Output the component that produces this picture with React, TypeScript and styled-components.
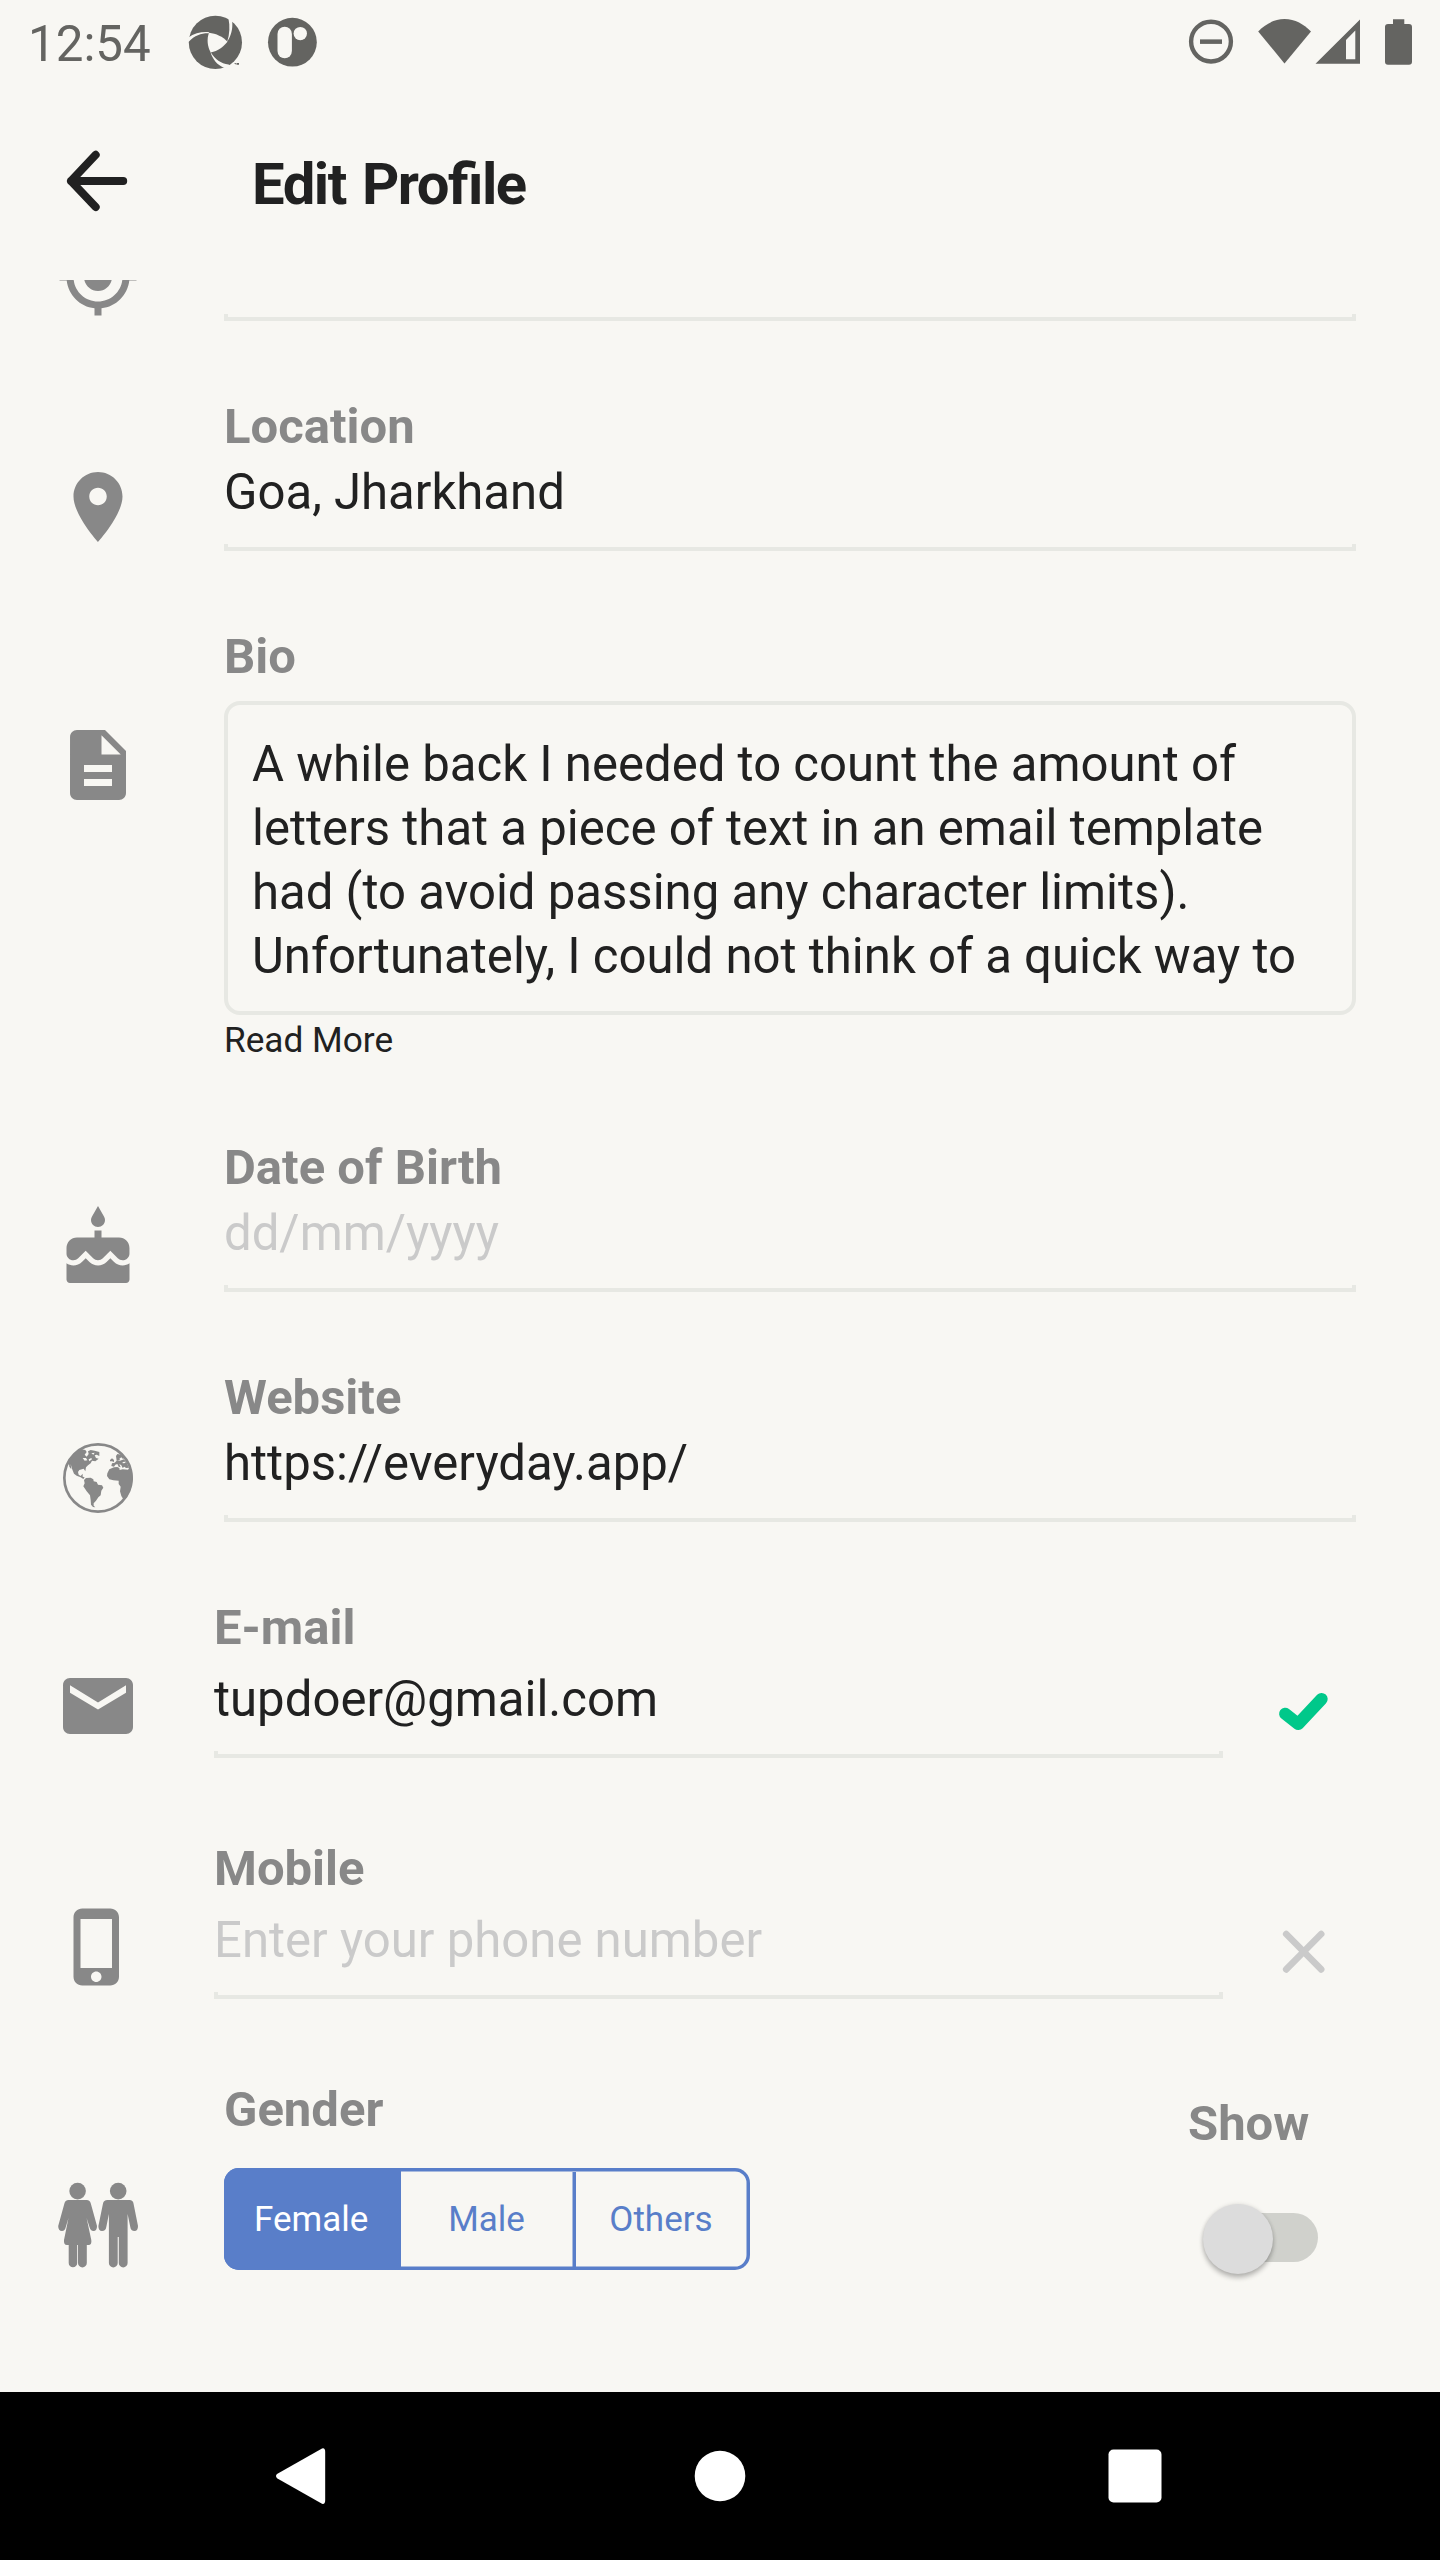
import React, { useState } from 'react';
import styled, { createGlobalStyle } from 'styled-components';

const color = {
  page: '#f8f7f3',
  ink: '#212121',
  muted: '#888888',
  hint: '#cacaca',
  line: '#e7e8e3',
  status: '#646461',
  accent: '#597ec9',
  ok: '#00c88a',
};

const GlobalStyle = createGlobalStyle`
  * { box-sizing: border-box; }
  body { margin: 0; background: ${color.page}; }
`;

const Screen = styled.div`
  display: flex;
  flex-direction: column;
  width: 1440px;
  height: 2560px;
  overflow: hidden;
  background: ${color.page};
  color: ${color.ink};
  font-family: Roboto, 'Liberation Sans', sans-serif;
`;

/* ---------- status bar ---------- */

const StatusBar = styled.header`
  display: flex;
  justify-content: space-between;
  height: 84px;
  padding: 0 26px 0 28px;
  color: ${color.status};
  flex: none;
`;

const StatusLeft = styled.div`
  display: flex;
  align-items: center;
`;

const Clock = styled.span`
  width: 160px;
  font-size: 49.3px;
  line-height: 58px;
  padding-top: 4px;
`;

const StatusIcon = styled.svg`
  display: block;
  flex: none;
`;

/* ---------- app bar ---------- */

const AppBar = styled.div`
  display: flex;
  align-items: center;
  flex: none;
  height: 196px;
  padding: 0 0 2px 55px;
`;

const BackButton = styled.button`
  width: 84px;
  height: 84px;
  margin: 0 113px 0 0;
  padding: 0;
  border: 0;
  background: none;
  color: ${color.ink};

  svg { display: block; }
`;

const Title = styled.h1`
  margin: 0;
  padding-top: 5px;
  font-size: 58px;
  line-height: 68px;
  font-weight: 700;
  letter-spacing: -1.45px;
  word-spacing: 3px;
  font-feature-settings: 'liga' 1;
`;

/* ---------- form ---------- */

const Scroller = styled.main`
  flex: 1;
  min-height: 0;
  overflow: hidden;
`;

const Form = styled.form`
  display: flex;
  flex-direction: column;
  margin-top: -113px;
`;

const Row = styled.section<{ $gap: number; $body: number }>`
  display: grid;
  grid-template-columns: 84px ${(p) => p.$body}px auto;
  column-gap: ${(p) => (p.$body > 1100 ? 84 : 74)}px;
  justify-content: start;
  align-items: start;
  padding-left: 56px;
  margin-bottom: ${(p) => p.$gap}px;
`;

const RowIcon = styled.svg<{ $top: number }>`
  display: block;
  margin-top: ${(p) => p.$top}px;
  overflow: visible;
  fill: ${color.muted};
`;

const Body = styled.div`
  display: flex;
  flex-direction: column;
  min-width: 0;
`;

const Label = styled.label`
  height: 58px;
  font-size: 49px;
  line-height: 60px;
  font-weight: 700;
  color: ${color.muted};
  white-space: nowrap;
`;

const Value = styled.div<{ $space: number; $hint?: boolean }>`
  height: 58px;
  margin: ${(p) => p.$space}px 0 23px;
  font-size: 49.1px;
  line-height: 58px;
  white-space: nowrap;
  color: ${(p) => (p.$hint ? color.hint : color.ink)};
`;

const Underline = styled.div`
  height: 7px;
  border: solid ${color.line};
  border-width: 0 4px 4px;
`;

const BioBox = styled.div`
  height: 314px;
  margin-top: 16px;
  padding: 27px 24px 0;
  border: 4px solid ${color.line};
  border-radius: 16px;
  font-size: 49.1px;
  line-height: 64px;
  white-space: pre;
`;

const ReadMore = styled.button`
  height: 47px;
  margin: 0;
  padding: 4px 0 1px;
  border: 0;
  background: none;
  font: 35.2px/42px Roboto, 'Liberation Sans', sans-serif;
  color: ${color.ink};
  text-align: left;
`;

const Mark = styled.svg`
  display: block;
  margin: 85px 0 0 -26px;
`;

/* ---------- gender ---------- */

const GenderBody = styled.div`
  display: flex;
  justify-content: space-between;
  padding-right: 48px;
`;

const Segments = styled.div`
  display: grid;
  grid-template-columns: 173.5px 174.5px 171px;
  width: 526px;
  height: 102px;
  margin-top: 30px;
  padding: 3.5px;
  box-shadow: inset 0 0 0 3.5px ${color.accent};
  border-radius: 15px;
  overflow: hidden;
`;

const Segment = styled.button<{ $on: boolean; $divider: boolean }>`
  padding: 2px 3.5px 0 0;
  border: 0;
  box-shadow: ${(p) => (p.$divider ? `inset -3.5px 0 0 ${color.accent}` : 'none')};
  background: ${(p) => (p.$on ? color.accent : 'transparent')};
  color: ${(p) => (p.$on ? '#ffffff' : color.accent)};
  font: 35px/42px Roboto, 'Liberation Sans', sans-serif;
  text-align: center;

  &:first-child { margin: -3.5px 0 -3.5px -3.5px; padding-right: 2.5px; }
  &:last-child { padding-right: 0; }
`;

const ShowColumn = styled.div`
  display: flex;
  flex-direction: column;
  align-items: flex-start;
  padding-top: 14px;
  width: 120px;
`;

const Switch = styled.button`
  display: flex;
  align-items: center;
  width: 113px;
  height: 49px;
  margin: 61px 0 0 17px;
  padding: 2px 0 0;
  border: 0;
  border-radius: 25px;
  background: linear-gradient(to right, transparent 30px, #d0d1cc 30px);
`;

const Thumb = styled.span`
  width: 70px;
  height: 70px;
  margin-left: -2px;
  flex: none;
  border-radius: 50%;
  background: #dcdcdc;
  box-shadow: 0 4px 5px rgba(0, 0, 0, 0.24), 0 0 4px rgba(0, 0, 0, 0.12);
`;

/* ---------- navigation bar ---------- */

const NavBar = styled.nav`
  display: flex;
  align-items: center;
  justify-content: space-between;
  flex: none;
  height: 168px;
  padding: 0 278px 0 275px;
  background: #000;

  svg { display: block; fill: #fff; }
  svg:nth-child(2) { margin-left: 6px; }
`;

/* ---------- drawings ---------- */

const materialPaths = {
  gps: 'M12 8c-2.21 0-4 1.79-4 4s1.79 4 4 4 4-1.79 4-4-1.79-4-4-4zm8.94 3c-.46-4.17-3.77-7.48-7.94-7.94V1h-2v2.06C6.83 3.52 3.52 6.83 3.06 11H1v2h2.06c.46 4.17 3.77 7.48 7.94 7.94V23h2v-2.06c4.17-.46 7.48-3.77 7.94-7.94H23v-2h-2.06zM12 19c-3.87 0-7-3.13-7-7s3.13-7 7-7 7 3.13 7 7-3.13 7-7 7z',
  place: 'M12 2C8.13 2 5 5.13 5 9c0 5.25 7 13 7 13s7-7.75 7-13c0-3.87-3.13-7-7-7zm0 9.5c-1.38 0-2.5-1.12-2.5-2.5s1.12-2.5 2.5-2.5 2.5 1.12 2.5 2.5-1.12 2.5-2.5 2.5z',
  description: 'M14 2H6c-1.1 0-1.99.9-1.99 2L4 20c0 1.1.89 2 1.99 2H18c1.1 0 2-.9 2-2V8l-6-6zm2 16H8v-2h8v2zm0-4H8v-2h8v2zm-3-5V3.5L18.5 9H13z',
  cake: 'M12 6c1.11 0 2-.9 2-2 0-.38-.1-.73-.29-1.03L12 0l-1.71 2.97c-.19.3-.29.65-.29 1.03 0 1.1.9 2 2 2zm4.6 9.99l-1.07-1.07-1.08 1.07c-1.3 1.3-3.58 1.31-4.89 0l-1.07-1.07-1.09 1.07C6.75 16.64 5.88 17 4.96 17c-.73 0-1.4-.23-1.96-.61V21c0 .55.45 1 1 1h16c.55 0 1-.45 1-1v-4.61c-.56.38-1.23.61-1.96.61-.92 0-1.79-.36-2.44-1.01zM18 9h-5V7h-2v2H6c-1.66 0-3 1.34-3 3v1.54c0 1.08.88 1.96 1.96 1.96.52 0 1.02-.2 1.38-.57l2.14-2.13 2.13 2.13c.74.74 2.03.74 2.77 0l2.14-2.13 2.13 2.13c.37.37.86.57 1.38.57 1.08 0 1.96-.88 1.96-1.96V12C21 10.34 19.66 9 18 9z',
  mail: 'M20 4H4c-1.1 0-1.99.9-1.99 2L2 18c0 1.1.9 2 2 2h16c1.1 0 2-.9 2-2V6c0-1.1-.9-2-2-2zm0 4.2l-8 4.8-8-4.8V6.1l8 4.9 8-4.9v2.1z',
  phone: 'M15.5 1h-8C6.12 1 5 2.12 5 3.5v17C5 21.88 6.12 23 7.5 23h8c1.38 0 2.5-1.12 2.5-2.5v-17C18 2.12 16.88 1 15.5 1zm-4 21c-.83 0-1.5-.67-1.5-1.5s.67-1.5 1.5-1.5 1.5.67 1.5 1.5-.67 1.5-1.5 1.5zm4.5-4H7V4h9v14z',
};

const MaterialIcon = ({ name, top }: { name: keyof typeof materialPaths; top: number }) => (
  <RowIcon $top={top} width="84" height="84" viewBox="0 0 24 24">
    <path d={materialPaths[name]} />
  </RowIcon>
);

const EarthIcon = ({ top }: { top: number }) => (
  <RowIcon $top={top} width="84" height="84" viewBox="0 0 252 252">
    <circle cx="126" cy="126" r="101" fill="none" stroke={color.muted} strokeWidth="8" />
    <path d="M38 76L48 60L62 48L76 40L88 42L92 48L86 56L92 62L98 54L96 46L104 42L116 44L130 48L130 60L122 56L116 58L120 66L128 68L118 76L108 74L104 82L96 88L90 94L88 106L83 98L70 102L66 108L68 116L74 120L80 113L80 122L86 124L82 129L74 124L62 119L54 113L48 98L44 84L46 100L40 92Z" />
    <path d="M80 66L90 66L94 73L86 74Z M98 70L106 66L108 70L100 76Z M106 52L116 50L112 56Z" fill={color.page} />
    <path d="M84 132L90 126L104 125L112 130L113 136L122 138L126 146L138 148L142 155L136 164L134 178L127 184L120 194L113 202L113 209L118 214L111 213L105 206L104 192L102 178L92 166L82 151L86 142Z" />
    <path d="M160 100L174 94L184 93L190 96L191 102L200 100L216 101L220 96L229 110L231 130L226 154L212 184L202 190L196 180L192 166L194 152L188 144L188 134L172 133L160 130L153 120L154 112Z" />
    <path d="M162 72L168 67L174 72L174 78L168 76L162 76Z M180 60L184 54L196 56L206 66L200 68L196 64L190 68L192 72L182 74Z M166 90L168 82L176 80L182 74L192 74L204 70L212 80L219 95L210 96L205 92L200 96L196 88L190 84L194 94L188 92L184 84L178 86L174 92Z" />
    <path d="M200 78L208 77L208 81L200 82Z" fill={color.page} />
  </RowIcon>
);

const PeopleIcon = ({ top }: { top: number }) => (
  <RowIcon $top={top} width="84" height="85" viewBox="0 0 84 85">
    <circle cx="21.6" cy="8.1" r="8.3" />
    <circle cx="62.2" cy="8.1" r="8.3" />
    <path d="M12.5 17H30.7Q34 17 34.8 20.5L41 43Q41 48 37.5 48Q34.5 48 33.5 44L30.6 35L35.3 57Q36 62 32.5 62H30.8V80a4.3 4.3 0 0 1-8.8 0V62H21.2V80a4.2 4.2 0 0 1-8.5 0V62H11Q7.5 62 8 57L12.5 35L9.8 44Q9 48 6 48Q2.2 48 2.2 43L8.4 20.5Q9.2 17 12.5 17Z" />
    <path d="M51.5 17H73.5Q77 17 77.5 20.5L82 43Q82 48 78.5 48Q74.8 48 74.3 44L71.6 31V80a4.3 4.3 0 0 1-8.8 0V54H61.7V80a4.3 4.3 0 0 1-8.8 0V31L50.3 44Q49.8 48 46 48Q42.4 48 42.4 43L47 20.5Q47.6 17 51.5 17Z" />
  </RowIcon>
);

const StatusApps = () => (
  <StatusIcon width="132" height="84" viewBox="188 0 132 84">
    <ellipse cx="215.4" cy="42.4" rx="26.6" ry="26.7" fill={color.status} />
    <g fill={color.page}>
      <path d="M209 32.7C216 33.6 223 36.5 227.5 41.7C223.5 46.5 218 51 210.7 52.5C207.5 46.5 206.5 39.5 209 32.7Z" />
      <path d="M187 38.5C194 33 202 31.5 209 32.2L209 33.3C202 33 195 35 188.5 42Z" />
      <path d="M227 14L228.5 18.7C230 26 229.7 34 227.2 41.7C231 36 232.9 29 232.2 21.5L236 18Z" />
      <path d="M210.5 52.3C212.5 59 217 65 224 67.8L228 70L234 67L228.5 64.5C221 63.5 215 59.5 210.7 52.3Z" />
    </g>
    <path d="M234.5 63h2v1.8h-.8v-1h-1.2zM237 63h2v1.8h-2z" fill={color.status} />
    <circle cx="292.4" cy="42.2" r="24.4" fill={color.status} />
    <rect x="277.5" y="26.7" width="14.4" height="31.6" rx="7.2" fill={color.page} />
    <circle cx="300.3" cy="33.6" r="6.7" fill={color.page} />
  </StatusIcon>
);

const StatusSystem = () => (
  <StatusIcon width="226" height="84" viewBox="1188 0 226 84" fill={color.status}>
    <circle cx="1211" cy="41.6" r="19.9" fill="none" stroke={color.status} strokeWidth="4.4" />
    <rect x="1200" y="39.4" width="22" height="4.5" />
    <path d="M1284.5 63.4L1258.2 31.4C1265 24.5 1274 19 1284.5 19S1304 24.5 1311 31.4Z" />
    <path fillRule="evenodd" d="M1315.5 63.7L1360 19.6V63.7ZM1346 40V59.2H1355.3V30.6Z" />
    <path d="M1393 19.2h11.3v4.8h4.7a3 3 0 0 1 3 3v34.7a3 3 0 0 1-3 3h-21a3 3 0 0 1-3-3v-34.7a3 3 0 0 1 3-3h5z" />
  </StatusIcon>
);

/* ---------- rows ---------- */

type Field = {
  icon: keyof typeof materialPaths | 'earth';
  label: string;
  value: string;
  hint?: boolean;
  gap: number;
};

const TextRow = ({ icon, label, value, hint, gap }: Field) => (
  <Row $gap={gap} $body={1132}>
    {icon === 'earth' ? <EarthIcon top={68} /> : <MaterialIcon name={icon} top={68} />}
    <Body>
      <Label>{label}</Label>
      <Value $space={8} $hint={hint}>{value}</Value>
      <Underline />
    </Body>
  </Row>
);

type Contact = Omit<Field, 'gap' | 'icon'> & { icon: 'mail' | 'phone'; verified: boolean };

const ContactRow = ({ icon, label, value, hint, verified }: Contact) => (
  <Row $gap={81} $body={1009}>
    <MaterialIcon name={icon} top={66} />
    <Body>
      <Label>{label}</Label>
      <Value $space={14} $hint={hint}>{value}</Value>
      <Underline />
    </Body>
    <Mark width="66" height="60" viewBox="1271 1683 66 60" fill="none" strokeLinecap="round" strokeLinejoin="round">
      {verified ? (
        <path d="M1285.2 1713.8L1298.2 1724L1321.6 1699" stroke={color.ok} strokeWidth="12.2" />
      ) : (
        <path d="M1286.2 1693L1321.2 1728.4M1321.2 1693L1286.2 1728.4" stroke={color.hint} strokeWidth="6.6" />
      )}
    </Mark>
  </Row>
);

const bio = [
  'A while back I needed to count the amount of',
  'letters that a piece of text in an email template',
  'had (to avoid passing any character limits).',
  'Unfortunately, I could not think of a quick way to',
].join('\n');

const genders = ['Female', 'Male', 'Others'];

export default function App() {
  const [gender, setGender] = useState('Female');

  return (
    <>
      <GlobalStyle />
      <Screen>
        <StatusBar>
          <StatusLeft>
            <Clock>12:54</Clock>
            <StatusApps />
          </StatusLeft>
          <StatusSystem />
        </StatusBar>

        <AppBar>
          <BackButton type="button" aria-label="Back">
            <svg width="84" height="84" viewBox="55 139 84 84" fill="none" stroke="currentColor" strokeWidth="8" strokeLinecap="round" strokeLinejoin="round">
              <path d="M95.7 154.8L71 181L95.7 207M71 181H123.2" />
            </svg>
          </BackButton>
          <Title>Edit Profile</Title>
        </AppBar>

        <Scroller>
          <Form>
            <TextRow icon="gps" label="" value="" gap={76} />
            <TextRow icon="place" label="Location" value="Goa, Jharkhand" gap={76} />

            <Row $gap={76} $body={1132}>
              <MaterialIcon name="description" top={96} />
              <Body>
                <Label>Bio</Label>
                <BioBox>{bio}</BioBox>
                <ReadMore type="button">Read More</ReadMore>
              </Body>
            </Row>

            <TextRow icon="cake" label="Date of Birth" value="dd/mm/yyyy" hint gap={76} />
            <TextRow icon="earth" label="Website" value="https://everyday.app/" gap={76} />
            <ContactRow icon="mail" label="E-mail" value="tupdoer@gmail.com" verified />
            <ContactRow icon="phone" label="Mobile" value="Enter your phone number" hint verified={false} />

            <Row $gap={0} $body={1132}>
              <PeopleIcon top={103} />
              <GenderBody>
                <Body>
                  <Label>Gender</Label>
                  <Segments>
                    {genders.map((g, i) => (
                      <Segment key={g} type="button" $on={g === gender} $divider={i === 1} onClick={() => setGender(g)}>
                        {g}
                      </Segment>
                    ))}
                  </Segments>
                </Body>
                <ShowColumn>
                  <Label>Show</Label>
                  <Switch type="button" role="switch" aria-checked={false}>
                    <Thumb />
                  </Switch>
                </ShowColumn>
              </GenderBody>
            </Row>
          </Form>
        </Scroller>

        <NavBar>
          <svg width="51" height="58" viewBox="275 2447 51 58">
            <path d="M322 2448.4L277 2474Q275 2476 277 2478.2L322 2503.8Q325.2 2504.5 325.2 2500V2452Q325.2 2447.5 322 2448.4Z" />
          </svg>
          <svg width="52" height="52" viewBox="0 0 52 52"><circle cx="26" cy="26" r="25.3" /></svg>
          <svg width="54" height="54" viewBox="0 0 54 54"><rect x="0.5" y="0.5" width="53" height="53" rx="5" /></svg>
        </NavBar>
      </Screen>
    </>
  );
}
